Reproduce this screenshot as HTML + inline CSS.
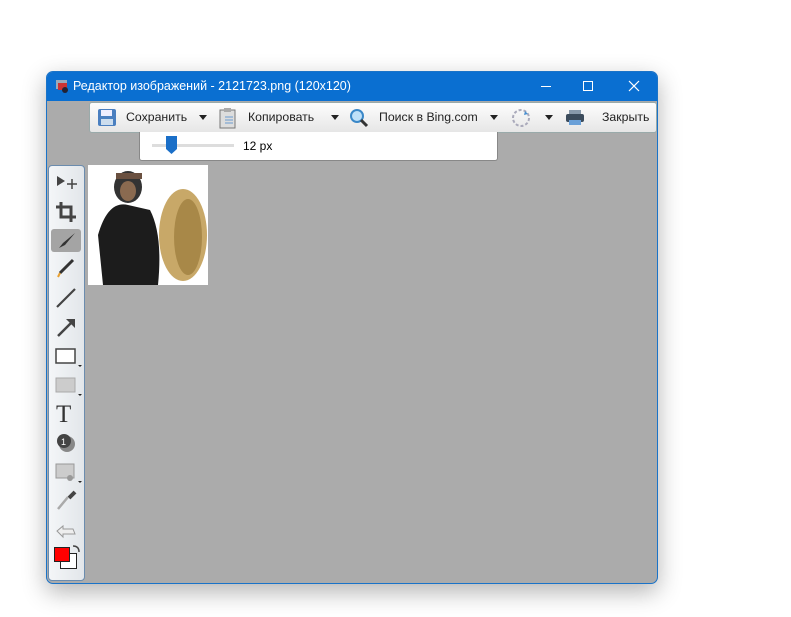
<!DOCTYPE html>
<html><head><meta charset="utf-8"><style>
*{margin:0;padding:0;box-sizing:border-box}
body{width:791px;height:617px;background:#fff;position:relative;overflow:hidden;font-family:"Liberation Sans","Noto Sans CJK SC",sans-serif;}
.win{position:absolute;left:46px;top:71px;width:612px;height:513px;background:#ababab;border:1px solid #1a73c8;border-radius:7px;box-shadow:0 8px 24px rgba(0,0,0,.3);overflow:hidden}
.title{position:absolute;left:0;top:0;width:100%;height:29px;background:#0a6fd1;color:#fff;font-size:12.5px}
.title span{position:absolute;left:26px;top:7px}
.tb{position:absolute;left:42px;top:30px;width:568px;height:31px;background:linear-gradient(#fdfdfd,#e6e6e6);border:1px solid #9aa;border-radius:3px;font-size:12.3px;color:#222}
.tb .t{position:absolute;top:7px}
.arr{position:absolute;top:12px;width:0;height:0;border-left:4px solid transparent;border-right:4px solid transparent;border-top:5px solid #222}
.sl{position:absolute;left:92px;top:60px;width:359px;height:29px;background:#fff;border:1px solid #888;border-top:none;border-radius:0 0 3px 3px;font-size:12px}
.left{position:absolute;left:1px;top:93px;width:37px;height:416px;background:linear-gradient(90deg,#f4f6f8,#e2e6ea);border:1px solid #6b8cae;border-radius:4px}
.ic{position:absolute;left:6px}
</style></head><body>
<div class="win">
 <div class="title">
  <svg style="position:absolute;left:8px;top:7px" width="14" height="14"><rect x="1" y="1" width="11" height="9" fill="#9ab"/><rect x="3" y="4" width="9" height="7" fill="#c33"/><circle cx="10" cy="11" r="3" fill="#223"/></svg>
  <span>Редактор изображений - 2121723.png (120x120)</span>
  <div style="position:absolute;left:494px;top:14px;width:10px;height:1px;background:#fff"></div>
  <div style="position:absolute;left:536px;top:9px;width:10px;height:10px;border:1px solid #fff"></div>
  <svg style="position:absolute;left:581px;top:8px" width="12" height="12"><path d="M1 1L11 11M11 1L1 11" stroke="#fff" stroke-width="1.2"/></svg>
 </div>
 <div class="tb">
  <svg style="position:absolute;left:7px;top:5px" width="20" height="19"><rect x="1" y="1" width="18" height="17" rx="2" fill="#4a7fc0"/><rect x="4" y="2" width="11" height="6" fill="#eef"/><rect x="4" y="11" width="12" height="6" fill="#cde"/></svg>
  <span class="t" style="left:36px">Сохранить</span><div class="arr" style="left:109px"></div>
  <svg style="position:absolute;left:129px;top:4px" width="18" height="22"><rect x="1" y="3" width="15" height="18" fill="#ddd" stroke="#777"/><rect x="5" y="1" width="7" height="4" fill="#aaa"/><path d="M6 10h8M6 13h8M6 16h8" stroke="#6a9ad0"/></svg>
  <span class="t" style="left:158px">Копировать</span><div class="arr" style="left:241px"></div>
  <svg style="position:absolute;left:259px;top:5px" width="20" height="20"><circle cx="8" cy="8" r="6" fill="#bfe0f8" stroke="#3b88c8" stroke-width="2"/><path d="M12 12l6 6" stroke="#333" stroke-width="3"/></svg>
  <span class="t" style="left:289px">Поиск в Bing.com</span><div class="arr" style="left:400px"></div>
  <svg style="position:absolute;left:421px;top:5px" width="20" height="20"><circle cx="10" cy="10" r="8" fill="none" stroke="#aab" stroke-dasharray="3 2" stroke-width="2"/><path d="M14 3l3 3-4 1z" fill="#4a90d0"/></svg>
  <div class="arr" style="left:455px"></div>
  <svg style="position:absolute;left:475px;top:6px" width="20" height="18"><rect x="4" y="1" width="12" height="5" fill="#89a"/><rect x="1" y="5" width="18" height="8" rx="2" fill="#3c4c5c"/><rect x="4" y="11" width="12" height="5" fill="#6aa0d8"/></svg>
  <span class="t" style="left:512px">Закрыть</span>
 </div>
 <div class="sl">
  <div style="position:absolute;left:12px;top:12px;width:82px;height:3px;background:#ddd"></div>
  <svg style="position:absolute;left:26px;top:4px" width="11" height="18"><path d="M0 0h11v13l-5.5 5L0 13z" fill="#1a6fc8"/></svg>
  <span style="position:absolute;left:103px;top:7px">12 px</span>
 </div>
 <div class="left">
  <svg class="ic" style="top:8px" width="24" height="16"><path d="M2 2l8 5-8 5z" fill="#444"/><path d="M17 5v10M12 10h10" stroke="#444" stroke-width="1.5"/></svg>
  <svg class="ic" style="top:35px" width="22" height="22"><path d="M6 1v15h15M1 6h15v15" stroke="#444" stroke-width="3" fill="none"/></svg>
  <div style="position:absolute;left:2px;top:63px;width:30px;height:23px;background:#a4a4a4;border-radius:3px"></div>
  <svg class="ic" style="top:65px" width="22" height="20"><path d="M20 2L8 12l-4 5 6-3z" fill="#333"/></svg>
  <svg class="ic" style="top:92px" width="22" height="22"><path d="M18 2L5 15" stroke="#333" stroke-width="3"/><path d="M5 15l-2 4" stroke="#e8a030" stroke-width="2"/></svg>
  <svg class="ic" style="top:121px" width="22" height="22"><path d="M20 2L2 20" stroke="#444" stroke-width="2.2"/></svg>
  <svg class="ic" style="top:150px" width="22" height="22"><path d="M3 20L17 6" stroke="#444" stroke-width="2.5"/><path d="M11 3h9v9z" fill="#444"/></svg>
  <svg class="ic" style="top:180px" width="28" height="22"><rect x="1" y="3" width="19" height="14" fill="#fff" stroke="#444" stroke-width="1.5"/><path d="M23 19h4l-2 2z" fill="#222"/></svg>
  <svg class="ic" style="top:209px" width="28" height="22"><rect x="1" y="3" width="19" height="14" fill="#ccc" stroke="#aaa"/><path d="M23 19h4l-2 2z" fill="#222"/></svg>
  <div style="position:absolute;left:7px;top:235px;font-family:'Liberation Serif',serif;font-size:25px;color:#333">T</div>
  <svg class="ic" style="top:266px" width="22" height="22"><circle cx="12" cy="12" r="8" fill="#888"/><circle cx="9" cy="9" r="7" fill="#444"/><text x="6" y="13" font-size="9" fill="#fff" font-family="Liberation Sans">1</text></svg>
  <svg class="ic" style="top:296px" width="28" height="22"><rect x="1" y="2" width="18" height="14" fill="#ccc" stroke="#999"/><circle cx="15" cy="16" r="3" fill="#999"/><path d="M23 19h4l-2 2z" fill="#222"/></svg>
  <svg class="ic" style="top:324px" width="22" height="22"><path d="M20 2l-6 6" stroke="#444" stroke-width="4"/><path d="M13 7L3 19" stroke="#aaa" stroke-width="2.5"/></svg>
  <svg class="ic" style="top:353px" width="22" height="20"><path d="M2 12l6-5v3h10l2 5H8v3z" fill="#eee" stroke="#999"/></svg>
  <div style="position:absolute;left:11px;top:387px;width:17px;height:16px;background:#fff;border:1px solid #222"></div>
  <div style="position:absolute;left:5px;top:381px;width:16px;height:15px;background:#f00;border:1px solid #222"></div>
  <svg style="position:absolute;left:22px;top:378px" width="10" height="10"><path d="M2 2q6 0 6 6" stroke="#444" stroke-width="1.5" fill="none"/></svg>
 </div>
 <svg style="position:absolute;left:41px;top:93px" width="120" height="120">
  <rect width="120" height="120" fill="#fff"/>
  <ellipse cx="95" cy="70" rx="24" ry="46" fill="#c8a868"/>
  <ellipse cx="100" cy="72" rx="14" ry="38" fill="#a88848"/>
  <path d="M15 120L10 70Q20 35 40 40L62 45Q75 70 70 120z" fill="#1c1c1c"/>
  <ellipse cx="40" cy="22" rx="14" ry="16" fill="#333"/>
  <ellipse cx="40" cy="26" rx="8" ry="10" fill="#8a6a50"/>
  <rect x="28" y="8" width="26" height="6" fill="#6a5040"/>
 </svg>
</div>
</body></html>
